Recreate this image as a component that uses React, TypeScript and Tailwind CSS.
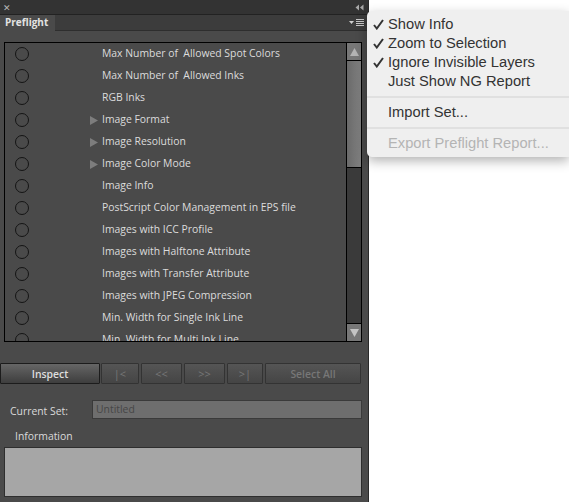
const rows = [
  { label: "Max Number of  Allowed Spot Colors" },
  { label: "Max Number of  Allowed Inks" },
  { label: "RGB Inks" },
  { label: "Image Format", arrow: true },
  { label: "Image Resolution", arrow: true },
  { label: "Image Color Mode", arrow: true },
  { label: "Image Info" },
  { label: "PostScript Color Management in EPS file" },
  { label: "Images with ICC Profile" },
  { label: "Images with Halftone Attribute" },
  { label: "Images with Transfer Attribute" },
  { label: "Images with JPEG Compression" },
  { label: "Min. Width for Single Ink Line" },
  { label: "Min. Width for Multi Ink Line" },
];

const navButtons = [
  { label: "|<", width: "w-[38px]" },
  { label: "<<", width: "w-[41px]" },
  { label: ">>", width: "w-[41px]" },
  { label: ">|", width: "w-[36px]" },
];

function MenuItem({ label, checked, disabled }: { label: string; checked?: boolean; disabled?: boolean }) {
  return (
    <div className={`flex h-[19px] items-center pl-[6px] ${disabled ? "text-[#b4b4b4]" : "text-[#333333]"}`}>
      <span className="flex w-[15px] shrink-0 items-center">
        {checked && (
          <svg width="11" height="11" viewBox="0 0 11 11">
            <path d="M1 6 L3.8 9.5 L10 1" fill="none" stroke="#333333" strokeWidth="2" />
          </svg>
        )}
      </span>
      <span className="whitespace-nowrap">{label}</span>
    </div>
  );
}

export default function App() {
  return (
    <div className="relative h-[502px] w-[569px] overflow-hidden bg-white font-['Open_Sans',sans-serif]">
      <div className="flex h-full w-[369px] flex-col border-r border-[#2a2a2a] bg-[#4a4a4a]">
        {/* title bar */}
        <div className="flex h-[14px] shrink-0 items-center justify-between bg-[#333333] px-[3px] text-[9px] leading-none text-[#b8b8b8]">
          <span>✕</span>
          <svg width="9" height="7" viewBox="0 0 9 7" className="mr-[1px]">
            <path d="M4 0.5 L0.5 3.5 L4 6.5 Z M8.5 0.5 L5 3.5 L8.5 6.5 Z" fill="#a8a8a8" />
          </svg>
        </div>

        {/* tab strip */}
        <div className="flex h-[17px] shrink-0 items-stretch justify-between border-y border-t-[#222222] border-b-[#2e2e2e] bg-[#3c3c3c]">
          <div className="-mb-[1px] w-[55px] bg-[#4a4a4a] pl-[5px] text-[10px] font-bold leading-[15px] text-[#e2e2e2]">Preflight</div>
          <div className="flex items-center gap-[2px] pr-[4px]">
            <svg width="5" height="3" viewBox="0 0 5 3">
              <path d="M0 0 H5 L2.5 3 Z" fill="#d0d0d0" />
            </svg>
            <svg width="8" height="7" viewBox="0 0 8 7">
              <path d="M0 .5 H8 M0 2.5 H8 M0 4.5 H8 M0 6.5 H8" stroke="#c8c8c8" strokeWidth="1" />
            </svg>
          </div>
        </div>

        {/* list */}
        <div className="ml-[4px] mr-[6px] mt-[11px] flex h-[300px] shrink-0 border border-black bg-[#4a4a4a]">
          <div className="min-w-0 flex-1 overflow-hidden">
            {rows.map((row) => (
              <div key={row.label} className="flex h-[22px] shrink-0 items-center">
                <span className="ml-[10px] h-[14px] w-[14px] shrink-0 rounded-full border border-[#141414]" />
                <span className="ml-[61px] w-[12px] shrink-0">
                  {row.arrow && (
                    <svg width="8" height="9" viewBox="0 0 8 9">
                      <path d="M0 0 L8 4.5 L0 9 Z" fill="#7d7d7d" />
                    </svg>
                  )}
                </span>
                <span className="whitespace-pre pb-[2px] text-[10.4px] leading-[14px] text-[#dcdcdc]">{row.label}</span>
              </div>
            ))}
          </div>

          {/* scrollbar */}
          <div className="flex w-[15px] shrink-0 flex-col border-l border-black bg-[#3a3a3a]">
            <div className="flex h-[18px] shrink-0 items-center justify-center border-b border-black bg-[#777777]">
              <svg width="9" height="8" viewBox="0 0 9 8">
                <path d="M4.5 0 L9 8 H0 Z" fill="#b4b4b4" />
              </svg>
            </div>
            <div className="h-[107px] shrink-0 border-b border-black bg-gradient-to-r from-[#6a6a6a] to-[#808080]" />
            <div className="flex-1" />
            <div className="flex h-[18px] shrink-0 items-center justify-center border-t border-black bg-[#777777]">
              <svg width="9" height="8" viewBox="0 0 9 8">
                <path d="M0 0 H9 L4.5 8 Z" fill="#c4c4c4" />
              </svg>
            </div>
          </div>
        </div>

        {/* buttons */}
        <div className="mt-[21px] flex h-[21px] shrink-0 gap-[2px]">
          <button className="-mr-[1px] w-[100px] rounded-[1px] border border-[#1c1c1c] bg-gradient-to-b from-[#666666] to-[#3e3e3e] text-[10.4px] font-semibold leading-[14px] text-[#dedede]">
            Inspect
          </button>
          {navButtons.map((btn) => (
            <button
              key={btn.label}
              className={`${btn.width} rounded-[1px] border border-[#333333] bg-gradient-to-b from-[#555555] to-[#454545] text-[11px] leading-[14px] text-[#777777]`}
            >
              {btn.label}
            </button>
          ))}
          <button className="w-[96px] rounded-[1px] border border-[#333333] bg-gradient-to-b from-[#555555] to-[#454545] text-[10.4px] font-semibold leading-[14px] text-[#777777]">
            Select All
          </button>
        </div>

        {/* current set */}
        <div className="mt-[16px] flex h-[19px] shrink-0 items-center pr-[6px]">
          <span className="w-[92px] shrink-0 pl-[10px] pt-[5px] text-[10.4px] text-[#dadada]">Current Set:</span>
          <div className="flex h-full flex-1 items-center border border-[#3a3a3a] bg-[#6e6e6e] pl-[3px] text-[10.4px] text-[#464646]">
            Untitled
          </div>
        </div>

        {/* information */}
        <div className="mt-[10px] pl-[15px] text-[10.4px] leading-[14px] text-[#dadada]">Information</div>
        <div className="ml-[4px] mr-[6px] mt-[4px] h-[50px] shrink-0 border border-[#2e2e2e] bg-[#a6a6a6]" />
      </div>

      {/* flyout menu */}
      <div className="absolute left-[367px] top-[11px] h-[146px] w-[202px] rounded-l-[5px] bg-[#efefef] pt-[4px] font-['Liberation_Sans',sans-serif] text-[14.7px] shadow-[0_4px_12px_rgba(0,0,0,0.3)]">
        <MenuItem label="Show Info" checked />
        <MenuItem label="Zoom to Selection" checked />
        <MenuItem label="Ignore Invisible Layers" checked />
        <MenuItem label="Just Show NG Report" />
        <div className="mb-[5px] mt-[5px] h-[2px] bg-[#e0e0e0]" />
        <MenuItem label="Import Set..." />
        <div className="mb-[5px] mt-[5px] h-[2px] bg-[#e0e0e0]" />
        <MenuItem label="Export Preflight Report..." disabled />
      </div>
    </div>
  );
}
